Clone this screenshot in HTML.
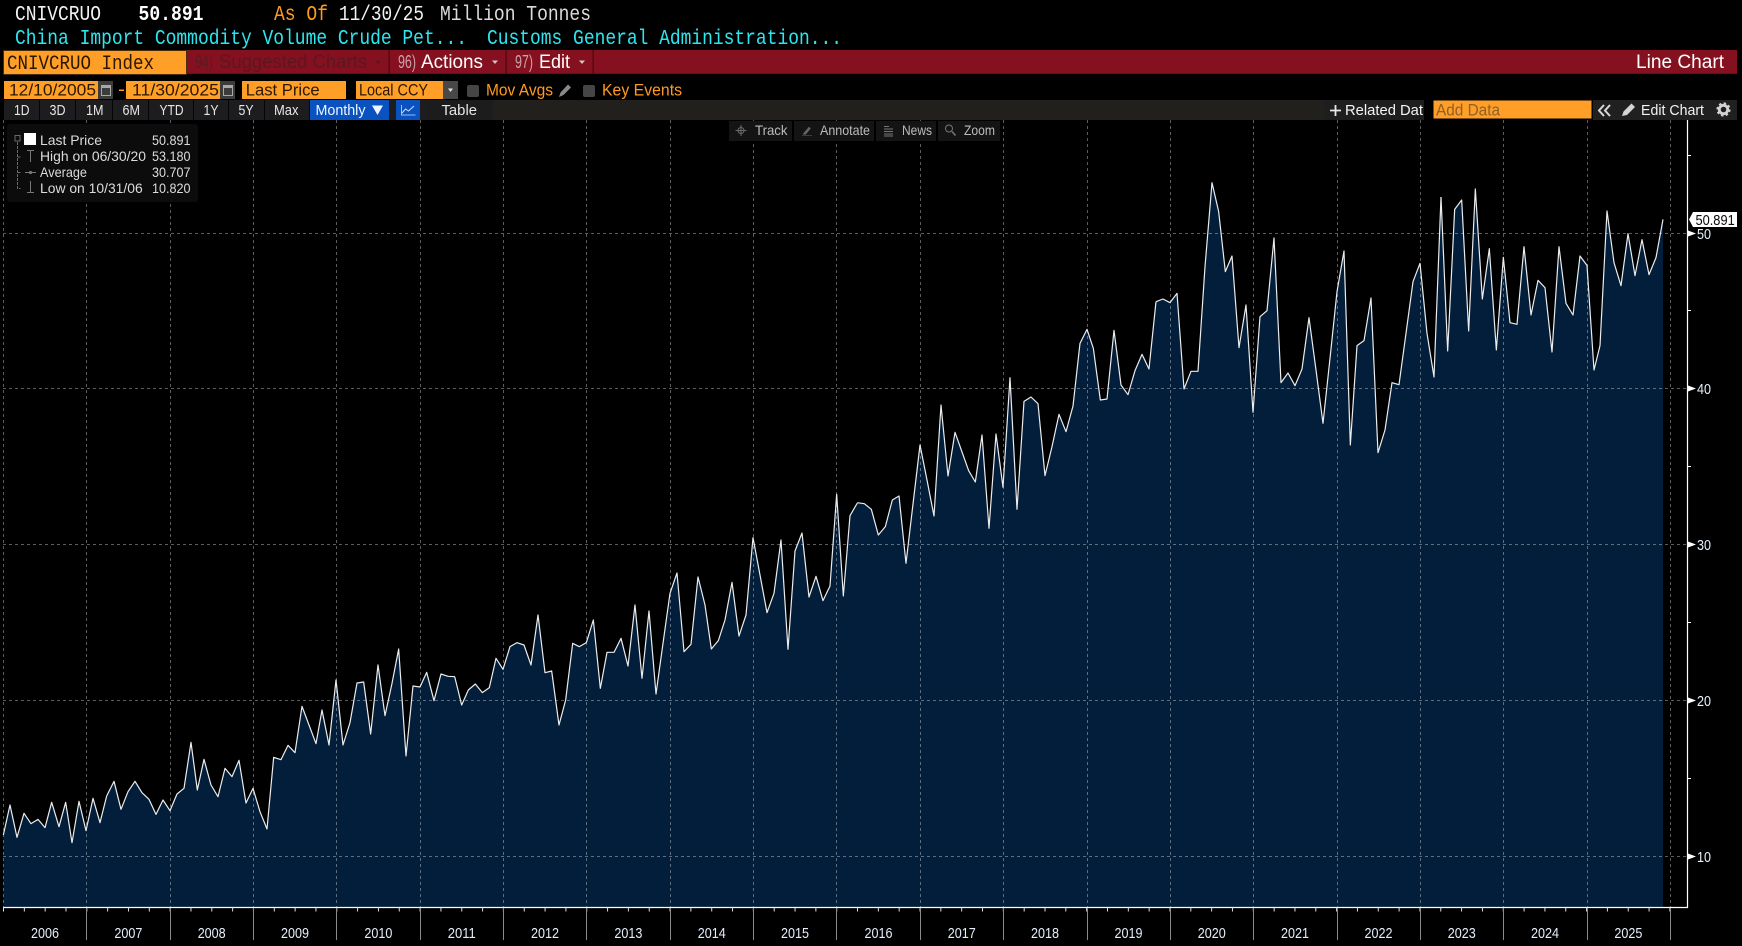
<!DOCTYPE html>
<html lang="en">
<head>
<meta charset="utf-8">
<title>CNIVCRUO Index Line Chart</title>
<style>
html,body{margin:0;padding:0;background:#000;width:1742px;height:946px;overflow:hidden}
svg{display:block;position:absolute;left:0;top:0}
text{font-family:"Liberation Sans",sans-serif;white-space:pre}
.m{font-family:"Liberation Mono",monospace;font-size:21px}
.tb{font-size:15px;fill:#e6e6e6}
.lg{font-size:14px;fill:#dcdcdc}
.an{font-size:14px;fill:#bcbcbc}
.yr{font-size:14.5px;fill:#e4eefa}
.ax{font-size:14.5px;fill:#e8f0fa}
.inp{font-family:"Liberation Sans",sans-serif;font-size:17px;fill:#2d1800}
.or{font-size:17px;fill:#ff9a20}
.red{font-size:19px;fill:#fff}
.num{font-size:18px;fill:#c9a2a8}
</style>
</head>
<body>
<svg width="1742" height="946" viewBox="0 0 1742 946" xmlns="http://www.w3.org/2000/svg">
<rect width="1742" height="946" fill="#000"/>

<!-- area fill -->
<g fill="#021e3a" stroke="none">
<polygon transform="translate(0,640) scale(.33333)" points="10,801 10,585 30,495 51,592 72,520 93,551 114,538 135,563 155,487 177,560 197,487 216,608 237,484 258,572 279,475 300,548 320,468 342,424 363,508 384,455 405,424 426,458 447,478 468,523 489,480 510,512 531,462 552,445 573,307 592,450 612,358 633,435 654,470 675,385 696,410 717,361 738,489 759,445 780,515 801,567 821,352 843,359 864,316 885,338 906,199 927,255 948,311 966,210 987,315 1008,120 1029,315 1050,248 1071,129 1091,126 1112,282 1134,75 1155,227 1176,130 1196,27 1218,348 1239,138 1260,141 1280,97 1302,182 1323,102 1344,109 1365,110 1365,801"/>
<polygon transform="translate(450,500) scale(.33333)" points="-7,1221 -7,530 14,530 35,615 55,570 76,552 97,578 118,563 138,475 159,508 180,440 201,428 222,435 243,495 264,345 285,518 305,513 327,675 347,600 368,430 388,440 409,428 430,360 451,565 471,457 492,457 513,415 534,498 555,315 576,535 597,333 618,582 639,430 660,280 681,219 702,455 723,433 744,231 765,315 784,447 805,422 825,360 846,247 867,408 888,345 909,113 930,225 951,338 972,280 993,120 1014,448 1035,153 1056,99 1077,291 1098,229 1119,302 1140,258 1160,-17 1180,288 1200,47 1222,9 1222,1221"/>
<polygon transform="translate(850,300) scale(.33333)" points="2,1821 2,645 22,608 43,611 64,628 85,705 106,680 127,600 147,588 168,790 189,612 210,435 231,540 252,648 273,315 294,528 315,397 335,453 356,512 376,546 396,405 417,685 438,402 459,562 480,233 501,628 522,304 543,291 564,311 585,527 606,440 627,343 648,395 669,318 690,130 711,88 730,145 751,300 771,297 792,91 813,255 834,284 855,212 876,163 897,207 918,5 938,0 938,1821"/>
<polygon transform="translate(1150,170) scale(.33333)" points="18,2211 18,395 39,387 60,398 81,370 102,657 123,604 144,604 165,290 186,38 206,125 226,305 246,258 267,533 288,405 309,727 330,440 351,422 372,204 393,638 414,609 435,647 456,597 477,443 498,600 519,760 540,565 561,365 582,243 601,825 621,527 642,512 663,384 684,848 705,780 726,638 747,644 768,490 789,335 810,280 831,490 852,621 873,81 894,543 894,2211"/>
<polygon transform="translate(1442,170) scale(.33333)" points="-3,2211 -3,81 17,543 38,118 59,90 80,483 100,57 121,387 142,236 163,540 184,262 204,458 225,463 246,230 267,435 288,331 309,353 330,546 351,230 372,400 393,435 414,258 435,286 456,600 474,527 495,123 516,278 537,347 558,191 579,317 600,209 621,314 642,263 663,148 663,2211"/>
</g>

<!-- grid -->
<g stroke="#ffffff" stroke-opacity=".36" stroke-width="1" stroke-dasharray="3 3" fill="none">
<path d="M3 233.5H1687M3 388.5H1687M3 544.5H1687M3 700.5H1687M3 856.5H1687"/>
<path d="M3.5 120V907M86.5 120V907M170.5 120V907M253.5 120V907M336.5 120V907M420.5 120V907M503.5 120V907M586.5 120V907M670.5 120V907M753.5 120V907M836.5 120V907M920.5 120V907M1003.5 120V907M1087.5 120V907M1170.5 120V907M1253.5 120V907M1337.5 120V907M1420.5 120V907M1503.5 120V907M1587.5 120V907M1670.5 120V907"/>
</g>

<!-- price line -->
<g fill="none" stroke="#ececec" stroke-width="3.6" stroke-linejoin="round">
<polyline transform="translate(0,640) scale(.33333)" points="10,585 30,495 51,592 72,520 93,551 114,538 135,563 155,487 177,560 197,487 216,608 237,484 258,572 279,475 300,548 320,468 342,424 363,508 384,455 405,424 426,458 447,478 468,523 489,480 510,512 531,462 552,445 573,307 592,450 612,358 633,435 654,470 675,385 696,410 717,361 738,489 759,445 780,515 801,567 821,352 843,359 864,316 885,338 906,199 927,255 948,311 966,210 987,315 1008,120 1029,315 1050,248 1071,129 1091,126 1112,282 1134,75 1155,227 1176,130 1196,27 1218,348 1239,138 1260,141 1280,97 1302,182 1323,102 1344,109 1365,110"/>
<polyline transform="translate(450,500) scale(.33333)" points="14,530 35,615 55,570 76,552 97,578 118,563 138,475 159,508 180,440 201,428 222,435 243,495 264,345 285,518 305,513 327,675 347,600 368,430 388,440 409,428 430,360 451,565 471,457 492,457 513,415 534,498 555,315 576,535 597,333 618,582 639,430 660,280 681,219 702,455 723,433 744,231 765,315 784,447 805,422 825,360 846,247 867,408 888,345 909,113 930,225 951,338 972,280 993,120 1014,448 1035,153 1056,99 1077,291 1098,229 1119,302 1140,258 1160,-17 1180,288 1200,47 1222,9"/>
<polyline transform="translate(850,300) scale(.33333)" points="22,608 43,611 64,628 85,705 106,680 127,600 147,588 168,790 189,612 210,435 231,540 252,648 273,315 294,528 315,397 335,453 356,512 376,546 396,405 417,685 438,402 459,562 480,233 501,628 522,304 543,291 564,311 585,527 606,440 627,343 648,395 669,318 690,130 711,88 730,145 751,300 771,297 792,91 813,255 834,284 855,212 876,163 897,207 918,5"/>
<polyline transform="translate(1150,170) scale(.33333)" points="18,395 39,387 60,398 81,370 102,657 123,604 144,604 165,290 186,38 206,125 226,305 246,258 267,533 288,405 309,727 330,440 351,422 372,204 393,638 414,609 435,647 456,597 477,443 498,600 519,760 540,565 561,365 582,243 601,825 621,527 642,512 663,384 684,848 705,780 726,638 747,644 768,490 789,335 810,280 831,490 852,621 873,81"/>
<polyline transform="translate(1442,170) scale(.33333)" points="-3,81 17,543 38,118 59,90 80,483 100,57 121,387 142,236 163,540 184,262 204,458 225,463 246,230 267,435 288,331 309,353 330,546 351,230 372,400 393,435 414,258 435,286 456,600 474,527 495,123 516,278 537,347 558,191 579,317 600,209 621,314 642,263 663,148"/>
</g>

<!-- axes -->
<path d="M1687.5 120V907.5H3" fill="none" stroke="#fff" stroke-width="1.2"/>
<line x1="3" y1="909.5" x2="1670" y2="909.5" stroke="#ddd" stroke-width="4" stroke-dasharray="1 19.83"/>
<path d="M86.5 908V940M170.5 908V940M253.5 908V940M336.5 908V940M420.5 908V940M503.5 908V940M586.5 908V940M670.5 908V940M753.5 908V940M836.5 908V940M920.5 908V940M1003.5 908V940M1087.5 908V940M1170.5 908V940M1253.5 908V940M1337.5 908V940M1420.5 908V940M1503.5 908V940M1587.5 908V940M1670.5 908V940" stroke="#8a8a8a" stroke-width="1" fill="none"/>
<path d="M1688 155.5h3M1688 310.5h3M1688 466.5h3M1688 622.5h3M1688 778.5h3" stroke="#fff" stroke-width="1"/>
<g fill="#fff">
<polygon points="1688,230.5 1696,233.5 1688,236.5"/>
<polygon points="1688,385.5 1696,388.5 1688,391.5"/>
<polygon points="1688,541.5 1696,544.5 1688,547.5"/>
<polygon points="1688,697.5 1696,700.5 1688,703.5"/>
<polygon points="1688,853.5 1696,856.5 1688,859.5"/>
</g>
<text class="ax" x="1697" y="239" textLength="14" lengthAdjust="spacingAndGlyphs">50</text>
<text class="ax" x="1697" y="394" textLength="14" lengthAdjust="spacingAndGlyphs">40</text>
<text class="ax" x="1697" y="550" textLength="14" lengthAdjust="spacingAndGlyphs">30</text>
<text class="ax" x="1697" y="706" textLength="14" lengthAdjust="spacingAndGlyphs">20</text>
<text class="ax" x="1697" y="862" textLength="14" lengthAdjust="spacingAndGlyphs">10</text>
<polygon points="1689,219.5 1693,212 1737,212 1737,227 1693,227" fill="#fff"/>
<text x="1695.5" y="225" font-size="15" fill="#0a0a0a" textLength="39.2" lengthAdjust="spacingAndGlyphs">50.891</text>

<!-- years -->
<g>
<text class="yr" x="31" y="938" textLength="28" lengthAdjust="spacingAndGlyphs">2006</text>
<text class="yr" x="114.4" y="938" textLength="28" lengthAdjust="spacingAndGlyphs">2007</text>
<text class="yr" x="197.7" y="938" textLength="28" lengthAdjust="spacingAndGlyphs">2008</text>
<text class="yr" x="281" y="938" textLength="28" lengthAdjust="spacingAndGlyphs">2009</text>
<text class="yr" x="364.4" y="938" textLength="28" lengthAdjust="spacingAndGlyphs">2010</text>
<text class="yr" x="447.8" y="938" textLength="28" lengthAdjust="spacingAndGlyphs">2011</text>
<text class="yr" x="531" y="938" textLength="28" lengthAdjust="spacingAndGlyphs">2012</text>
<text class="yr" x="614.4" y="938" textLength="28" lengthAdjust="spacingAndGlyphs">2013</text>
<text class="yr" x="697.8" y="938" textLength="28" lengthAdjust="spacingAndGlyphs">2014</text>
<text class="yr" x="781" y="938" textLength="28" lengthAdjust="spacingAndGlyphs">2015</text>
<text class="yr" x="864.5" y="938" textLength="28" lengthAdjust="spacingAndGlyphs">2016</text>
<text class="yr" x="947.8" y="938" textLength="28" lengthAdjust="spacingAndGlyphs">2017</text>
<text class="yr" x="1031" y="938" textLength="28" lengthAdjust="spacingAndGlyphs">2018</text>
<text class="yr" x="1114.5" y="938" textLength="28" lengthAdjust="spacingAndGlyphs">2019</text>
<text class="yr" x="1197.8" y="938" textLength="28" lengthAdjust="spacingAndGlyphs">2020</text>
<text class="yr" x="1281" y="938" textLength="28" lengthAdjust="spacingAndGlyphs">2021</text>
<text class="yr" x="1364.5" y="938" textLength="28" lengthAdjust="spacingAndGlyphs">2022</text>
<text class="yr" x="1447.8" y="938" textLength="28" lengthAdjust="spacingAndGlyphs">2023</text>
<text class="yr" x="1531" y="938" textLength="28" lengthAdjust="spacingAndGlyphs">2024</text>
<text class="yr" x="1614.4" y="938" textLength="28" lengthAdjust="spacingAndGlyphs">2025</text>
</g>

<!-- header rows -->
<text class="m" x="15" y="20" fill="#f2f2f2" textLength="86" lengthAdjust="spacingAndGlyphs">CNIVCRUO</text>
<text class="m" x="138.5" y="20" fill="#fff" font-weight="bold" textLength="65" lengthAdjust="spacingAndGlyphs">50.891</text>
<text class="m" x="274" y="20" fill="#ff9a20" textLength="54" lengthAdjust="spacingAndGlyphs">As Of</text>
<text class="m" x="339" y="20" fill="#f2f2f2" textLength="85" lengthAdjust="spacingAndGlyphs">11/30/25</text>
<text class="m" x="440" y="20" fill="#dcdcdc" textLength="151" lengthAdjust="spacingAndGlyphs">Million Tonnes</text>
<text class="m" x="15" y="44" fill="#2ce6f0" textLength="452" lengthAdjust="spacingAndGlyphs">China Import Commodity Volume Crude Pet...</text>
<text class="m" x="487" y="44" fill="#2ce6f0" textLength="355" lengthAdjust="spacingAndGlyphs">Customs General Administration...</text>

<!-- red bar -->
<rect x="187" y="50" width="1550" height="24" fill="#85101f"/>
<rect x="187" y="73" width="1550" height="1" fill="#6d0c18"/>
<rect x="388.5" y="50" width="1.2" height="24" fill="#4d0912"/>
<rect x="505.5" y="50" width="1.2" height="24" fill="#4d0912"/>
<rect x="592.5" y="50" width="1.2" height="24" fill="#4d0912"/>
<rect x="3" y="50" width="184" height="25" fill="#4a2c08"/>
<rect x="4" y="51" width="182" height="23" fill="#ff9f28"/>
<text x="7" y="69" font-size="20" fill="#2a1700" style="font-family:'Liberation Mono',monospace" textLength="147" lengthAdjust="spacingAndGlyphs">CNIVCRUO Index</text>
<text class="num" x="195" y="68" style="fill:#5c1a24" textLength="18" lengthAdjust="spacingAndGlyphs">94)</text>
<text class="red" x="219" y="68" style="fill:#5c1722" textLength="148" lengthAdjust="spacingAndGlyphs">Suggested Charts</text>
<polygon points="375,60.5 381,60.5 378,64" fill="#5c1722"/>
<text class="num" x="398" y="68" textLength="18" lengthAdjust="spacingAndGlyphs">96)</text>
<text class="red" x="421" y="68" textLength="62" lengthAdjust="spacingAndGlyphs">Actions</text>
<polygon points="492,60.5 498,60.5 495,64" fill="#d8c4c6"/>
<text class="num" x="515" y="68" textLength="18" lengthAdjust="spacingAndGlyphs">97)</text>
<text class="red" x="539" y="68" textLength="31" lengthAdjust="spacingAndGlyphs">Edit</text>
<polygon points="579,60.5 585,60.5 582,64" fill="#d8c4c6"/>
<text class="red" x="1636" y="68" textLength="88" lengthAdjust="spacingAndGlyphs">Line Chart</text>

<!-- row 4 -->
<rect x="4" y="81" width="94" height="18" fill="#ff9f28"/>
<rect x="98" y="81" width="15" height="18" fill="#3c3c3c"/>
<text class="inp" x="9" y="95.5" textLength="87" lengthAdjust="spacingAndGlyphs">12/10/2005</text>
<path d="M101.5 85.5h9v10h-9z" fill="none" stroke="#a8a8a8"/><rect x="101" y="85" width="10" height="3" fill="#a8a8a8"/>
<rect x="119" y="89.5" width="5" height="1.5" fill="#ff9a20"/>
<rect x="126" y="81" width="94" height="18" fill="#ff9f28"/>
<rect x="220" y="81" width="15" height="18" fill="#3c3c3c"/>
<text class="inp" x="132" y="95.5" textLength="87" lengthAdjust="spacingAndGlyphs">11/30/2025</text>
<path d="M223.5 85.5h9v10h-9z" fill="none" stroke="#a8a8a8"/><rect x="223" y="85" width="10" height="3" fill="#a8a8a8"/>
<rect x="242" y="81" width="104" height="18" fill="#ff9f28"/>
<text class="inp" x="245.7" y="95.5" textLength="74" lengthAdjust="spacingAndGlyphs">Last Price</text>
<rect x="356" y="81" width="87" height="18" fill="#ff9f28"/>
<text class="inp" x="359" y="95.5" textLength="69" lengthAdjust="spacingAndGlyphs">Local CCY</text>
<rect x="443" y="81" width="15" height="18" fill="#484848"/>
<polygon points="448,88.5 453,88.5 450.5,92" fill="#e0e0e0"/>
<rect x="467" y="85" width="12" height="12" rx="2" fill="#454545"/>
<text class="or" x="486" y="95.5" textLength="67" lengthAdjust="spacingAndGlyphs">Mov Avgs</text>
<path d="M559 97l1.5-4.5 7.5-8 3 3-7.5 7.5z" fill="#8a8a8a"/>
<rect x="583" y="85" width="12" height="12" rx="2" fill="#454545"/>
<text class="or" x="602" y="95.5" textLength="80" lengthAdjust="spacingAndGlyphs">Key Events</text>

<!-- row 5 toolbar -->
<rect x="4" y="100" width="1733" height="20" fill="#22201c"/>
<rect x="4" y="100" width="489" height="20" fill="#1d1d1f"/>
<path d="M39.5 100v20M75.5 100v20M112.5 100v20M148.5 100v20M193.5 100v20M228.5 100v20M264.5 100v20M309.5 100v20" stroke="#050505" stroke-width="1"/>
<text class="tb" x="14" y="115" textLength="15.5" lengthAdjust="spacingAndGlyphs">1D</text>
<text class="tb" x="49.5" y="115" textLength="16" lengthAdjust="spacingAndGlyphs">3D</text>
<text class="tb" x="86" y="115" textLength="17.5" lengthAdjust="spacingAndGlyphs">1M</text>
<text class="tb" x="122.5" y="115" textLength="17.5" lengthAdjust="spacingAndGlyphs">6M</text>
<text class="tb" x="159.5" y="115" textLength="24" lengthAdjust="spacingAndGlyphs">YTD</text>
<text class="tb" x="203.5" y="115" textLength="15" lengthAdjust="spacingAndGlyphs">1Y</text>
<text class="tb" x="238.5" y="115" textLength="15" lengthAdjust="spacingAndGlyphs">5Y</text>
<text class="tb" x="274" y="115" textLength="24.5" lengthAdjust="spacingAndGlyphs">Max</text>
<rect x="310" y="100" width="79" height="20" fill="#0a52bf"/>
<text class="tb" x="315.5" y="115" style="fill:#f0f4ff" textLength="50" lengthAdjust="spacingAndGlyphs">Monthly</text>
<polygon points="372,105.5 383,105.5 377.5,115" fill="#f0f4ff"/>
<rect x="396" y="100" width="24" height="20" fill="#0a52bf"/>
<path d="M401.5 105v10h14" fill="none" stroke="#9cc0f0" stroke-width="1"/>
<path d="M402 113l3.5-4 3 2 5.5-5" fill="none" stroke="#cfe0fa" stroke-width="1"/>
<rect x="426" y="100" width="67" height="20" fill="#1c1c1c"/>
<text class="tb" x="441.5" y="115" textLength="35.5" lengthAdjust="spacingAndGlyphs">Table</text>

<rect x="1324" y="100" width="100" height="20" fill="#1e1e1e"/>
<path d="M1330 110.5h11M1335.5 105v11" stroke="#e8e8e8" stroke-width="1.8"/>
<text class="tb" x="1345" y="115" style="fill:#f4f4f4" textLength="78" lengthAdjust="spacingAndGlyphs">Related Dat</text>
<rect x="1424" y="100" width="169" height="20" fill="#000"/>
<rect x="1433.5" y="100.5" width="158" height="18" fill="#ff9f28"/>
<text x="1436" y="115.5" font-size="17" fill="#8d6128" textLength="64" lengthAdjust="spacingAndGlyphs">Add Data</text>
<rect x="1594" y="100" width="20" height="20" fill="#202020"/>
<path d="M1604 105l-5 5.5 5 5.5M1610 105l-5 5.5 5 5.5" fill="none" stroke="#d8d8d8" stroke-width="2"/>
<rect x="1616" y="100" width="94" height="20" fill="#202020"/>
<path d="M1622 116l1.5-4.5 8-8 3.5 3.5-8 8z" fill="#d4d4d4"/>
<text class="tb" x="1641" y="115" style="fill:#f0f4f8" textLength="63" lengthAdjust="spacingAndGlyphs">Edit Chart</text>
<rect x="1711" y="100" width="26" height="20" fill="#202020"/>
<circle cx="1723.5" cy="109.5" r="4.2" fill="none" stroke="#d4d4d4" stroke-width="2.8"/>
<circle cx="1723.5" cy="109.5" r="6" fill="none" stroke="#d4d4d4" stroke-width="2.2" stroke-dasharray="2.4 2.3"/>

<!-- annotation toolbar -->
<rect x="729" y="121" width="63" height="20" fill="#141414"/>
<rect x="794" y="121" width="80" height="20" fill="#141414"/>
<rect x="876" y="121" width="60" height="20" fill="#141414"/>
<rect x="938" y="121" width="62" height="20" fill="#141414"/>
<circle cx="741" cy="130.5" r="3" fill="none" stroke="#6a6a6a"/>
<path d="M741 125v11M735.5 130.5h11" stroke="#6a6a6a"/>
<path d="M802 135.5h10M803 134l6-7 1.5 1.5-5 6z" fill="#666" stroke="#666" stroke-width=".5"/>
<path d="M884 126.5h5M884 129h9M884 131.5h9M884 134h9M884 136h9" stroke="#777" stroke-width="1" fill="none"/>
<circle cx="949" cy="128.5" r="3.5" fill="none" stroke="#777"/>
<path d="M952 131.5l3.5 4" stroke="#777" stroke-width="1.6"/>
<text class="an" x="755" y="135" textLength="32.5" lengthAdjust="spacingAndGlyphs">Track</text>
<text class="an" x="820" y="135" textLength="50" lengthAdjust="spacingAndGlyphs">Annotate</text>
<text class="an" x="902" y="135" textLength="30" lengthAdjust="spacingAndGlyphs">News</text>
<text class="an" x="964" y="135" textLength="31" lengthAdjust="spacingAndGlyphs">Zoom</text>

<!-- legend -->
<rect x="7" y="124" width="191" height="78" rx="3" fill="#0c0c0c"/>
<rect x="15" y="135.5" width="5" height="5.5" fill="none" stroke="#6a6a6a"/>
<path d="M17.5 142V188.5h3M17.5 157h3M17.5 172.5h3" fill="none" stroke="#6a6a6a" stroke-dasharray="3 1"/>
<rect x="24" y="133" width="12" height="12" fill="#fff"/>
<path d="M27 150.5h7M30.5 150.5V162" stroke="#777" fill="none"/>
<path d="M25 172.5h11" stroke="#777"/><circle cx="30.5" cy="172.5" r="1.6" fill="#777"/>
<path d="M27 192.5h7M30.5 192.5V181" stroke="#777" fill="none"/>
<text class="lg" x="40" y="145" textLength="62" lengthAdjust="spacingAndGlyphs">Last Price</text>
<text class="lg" x="40" y="161" textLength="106" lengthAdjust="spacingAndGlyphs">High on 06/30/20</text>
<text class="lg" x="40" y="177" textLength="47" lengthAdjust="spacingAndGlyphs">Average</text>
<text class="lg" x="40" y="193" textLength="102.7" lengthAdjust="spacingAndGlyphs">Low on 10/31/06</text>
<text class="lg" x="152" y="145" textLength="38.5" lengthAdjust="spacingAndGlyphs">50.891</text>
<text class="lg" x="152" y="161" textLength="38.5" lengthAdjust="spacingAndGlyphs">53.180</text>
<text class="lg" x="152" y="177" textLength="38.5" lengthAdjust="spacingAndGlyphs">30.707</text>
<text class="lg" x="152" y="193" textLength="38.5" lengthAdjust="spacingAndGlyphs">10.820</text>
</svg>
</body>
</html>
